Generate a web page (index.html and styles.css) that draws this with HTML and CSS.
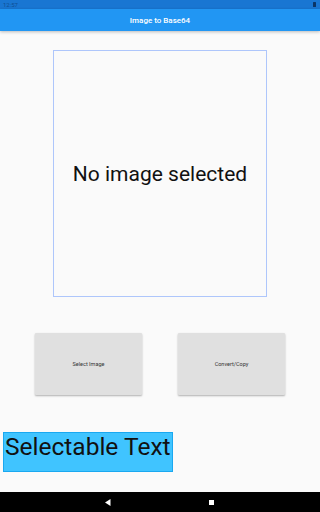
FILE: index.html
```html
<!DOCTYPE html>
<html lang="en">
<head>
  <meta charset="UTF-8">
  <meta name="viewport" content="width=device-width, initial-scale=1.0">
  <title>Image to Base64</title>
  <link rel="stylesheet" href="styles.css">
</head>
<body>
  <div class="screen">
    <div class="status-bar">
      <span class="time">12:57</span>
      <span class="battery"></span>
    </div>
    <header class="app-bar">Image to Base64</header>

    <main class="content">
      <div class="preview">
        <span class="preview-text">No image selected</span>
      </div>

      <div class="buttons">
        <button class="raised-btn">Select Image</button>
        <button class="raised-btn">Convert/Copy</button>
      </div>

      <div class="selectable">Selectable Text</div>
    </main>

    <nav class="nav-bar">
      <svg class="nav-back" width="6" height="7" viewBox="0 0 6 7"><polygon points="5.5,0 5.5,7 0,3.5" fill="#fff"/></svg>
      <span class="nav-home"></span>
    </nav>
  </div>
</body>
</html>
```

FILE: styles.css
```css
body {
  margin: 0;
  padding: 0;
  font-family: Roboto, "Liberation Sans", sans-serif;
  background-color: #fafafa;
}

.screen {
  width: 320px;
  height: 512px;
  display: flex;
  flex-direction: column;
  overflow: hidden;
}

.status-bar {
  height: 9px;
  background-color: #1976d2;
  display: flex;
  justify-content: space-between;
  align-items: center;
  padding: 0 3px;
}

.time {
  font-size: 6px;
  color: #0f4f94;
  line-height: 9px;
}

.battery {
  width: 3px;
  height: 5px;
  background-color: #0b3566;
  border-radius: 0.5px;
  margin-right: 1px;
}

.app-bar {
  height: 22px;
  background-color: #2196f3;
  color: #fff;
  font-size: 8px;
  font-weight: 500;
  display: flex;
  align-items: center;
  justify-content: center;
  box-shadow: 0 1px 3px rgba(0, 0, 0, 0.25);
  position: relative;
  z-index: 1;
}

.content {
  flex: 1;
  display: flex;
  flex-direction: column;
  align-items: center;
}

.preview {
  margin-top: 19px;
  width: 212px;
  height: 245px;
  border: 1px solid #aec6fb;
  display: flex;
  align-items: center;
  justify-content: center;
}

.preview-text {
  font-size: 21px;
  color: #111;
}

.buttons {
  margin-top: 36px;
  width: 100%;
  box-sizing: border-box;
  padding: 0 35px;
  display: flex;
  justify-content: space-between;
}

.raised-btn {
  width: 107px;
  height: 62px;
  border: none;
  border-radius: 1px;
  background-color: #e0e0e0;
  color: #333;
  font-family: Roboto, "Liberation Sans", sans-serif;
  font-size: 5.5px;
  padding: 0;
  box-shadow: 0 1px 2px rgba(0, 0, 0, 0.3);
}

.selectable {
  align-self: flex-start;
  margin-top: 37px;
  margin-left: 3px;
  width: 167px;
  height: 38px;
  background-color: #40c4ff;
  border: 1px solid #1aa8f0;
  font-size: 24.5px;
  line-height: 28px;
  white-space: nowrap;
  color: #111;
  padding-left: 1px;
}

.nav-bar {
  height: 20px;
  background-color: #000;
  display: flex;
  align-items: center;
  padding-left: 105px;
}

.nav-back {
  display: block;
}

.nav-home {
  width: 5px;
  height: 5px;
  background-color: #fff;
  margin-left: 98px;
}
```
